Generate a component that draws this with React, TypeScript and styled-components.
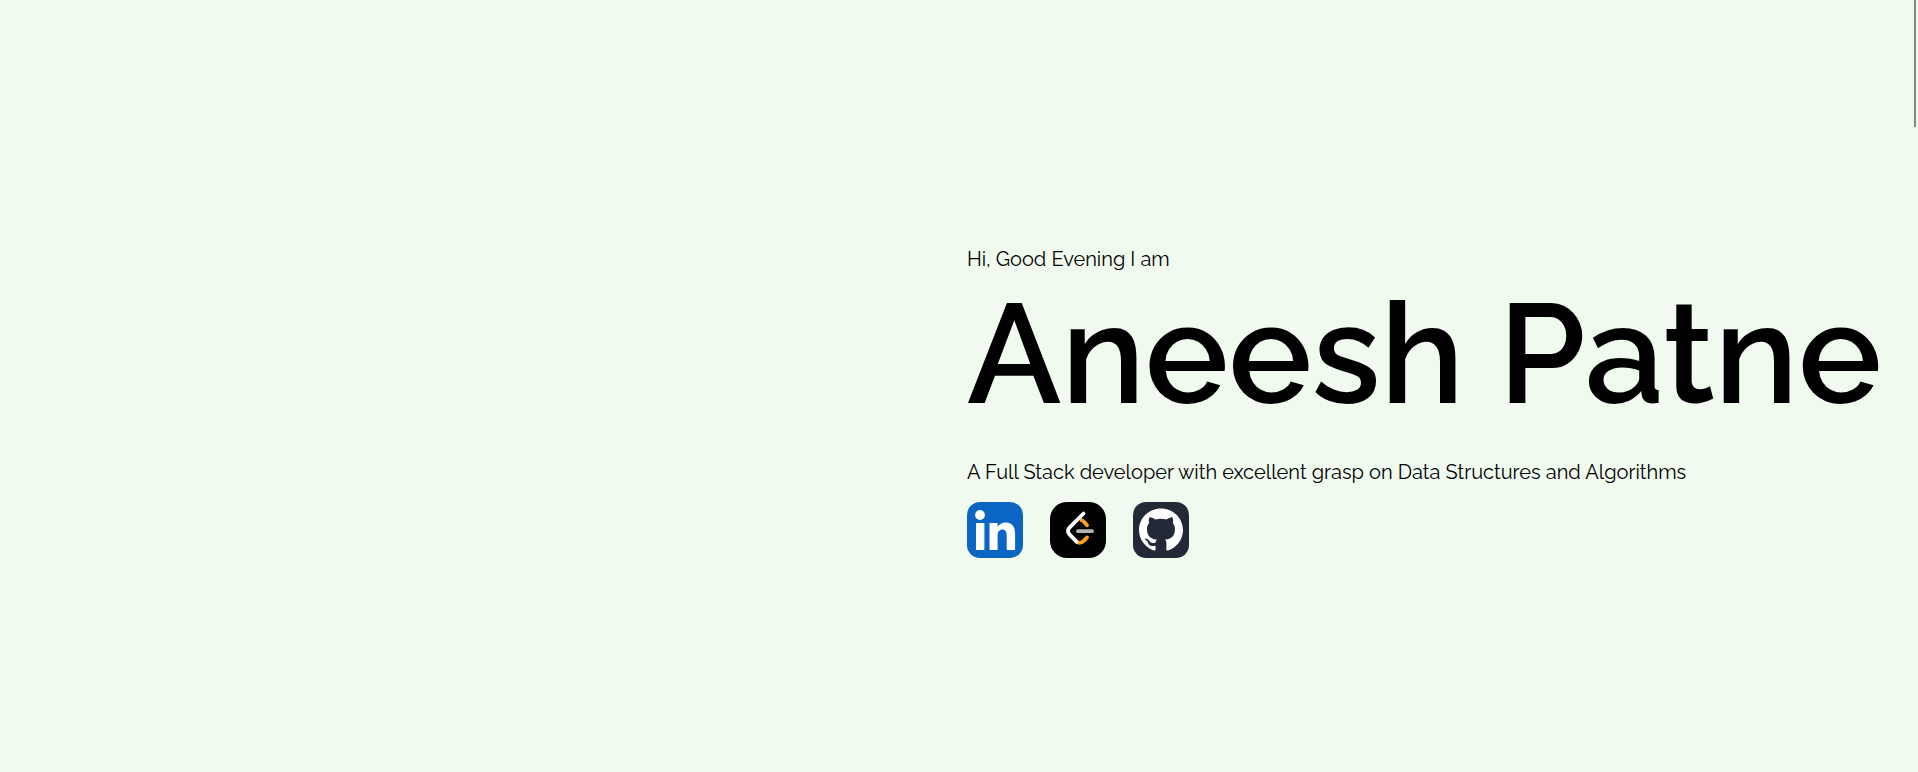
import React from "react";
import styled, { createGlobalStyle } from "styled-components";

const GlobalStyle = createGlobalStyle`
  *, *::before, *::after { box-sizing: border-box; }
  body {
    margin: 0;
    background: #f0faef;
    color: #000;
    font-family: Raleway, Lato, "Open Sans", sans-serif;
  }
`;

const Page = styled.main`
  display: grid;
  grid-template-columns: 1fr 1fr;
  align-items: center;
  min-height: 100vh;
  padding-top: 28px;
`;

const Artwork = styled.div`
  min-width: 0;
`;

const Intro = styled.section`
  min-width: 0;
  padding: 0 8px;
`;

const Line = styled.p`
  margin: 0;
  font-size: 20px;
  line-height: 32px;
`;

const Name = styled.h1`
  margin: 0;
  padding: 9px 0 32px;
  font-size: 140px;
  font-weight: 600;
  line-height: 140px;
  white-space: nowrap;
`;

const Links = styled.nav`
  display: flex;
  gap: 27px;
  padding-top: 14px;
`;

const IconLink = styled.a`
  display: block;
  width: 56px;
  height: 56px;

  svg { display: block; width: 100%; height: 100%; }
`;

const ScrollThumb = styled.div`
  position: fixed;
  top: 0;
  right: 2px;
  width: 2px;
  height: 127px;
  background: #868686;
`;

const LinkedInIcon = () => (
  <svg viewBox="0 0 56 56" aria-hidden="true">
    <rect width="56" height="56" rx="13" fill="#0a66c2" />
    <circle cx="13" cy="13" r="4.9" fill="#fff" />
    <rect x="9" y="21" width="8.4" height="27" rx=".7" fill="#fff" />
    <path
      fill="#fff"
      d="M23.2 21h6.7q.7 0 .7.7v3c1.600-2.600 4.500-4.300 8-4.300 6.500 0 9.500 4.300 9.500 11.100v15.800q0 .7-.7.7h-7q-.7 0-.7-.7V33.600c0-4-1.300-6.100-4.300-6.100-3.100 0-4.800 2.200-4.800 6.100v13.700q0 .7-.7.7h-6.700q-.7 0-.7-.7V21.700q0-.7.700-.7z"
    />
  </svg>
);

const LeetCodeIcon = () => (
  <svg viewBox="0 0 56 56" aria-hidden="true">
    <rect width="56" height="56" rx="17" fill="#000" />
    <g fill="none" strokeLinecap="round" strokeLinejoin="round" strokeWidth="3.8">
      <path stroke="#ffa116" d="M31.500 18.200q1.500.2 5.500 5" />
      <path stroke="#ffa116" d="M37 35.500l-3.200 3.400q-3.800 3.300-7.300.8" />
      <path stroke="#b3b3b3" d="M28 29.200h14" />
      <path stroke="#fff" d="M33.500 11.500L19.200 25.800q-2.400 3.100 0 6.400l7.300 7.500" />
    </g>
  </svg>
);

const GitHubIcon = () => (
  <svg viewBox="0 0 56 56" aria-hidden="true">
    <rect width="56" height="56" rx="13" fill="#242938" />
    <path
      fill="#fff"
      transform="translate(6 5.500) scale(1.833)"
      d="M12 .5C5.370.5 0 5.780 0 12.292c0 5.211 3.438 9.630 8.205 11.188.6.111.82-.254.82-.567 0-.28-.01-1.022-.015-2.005-3.338.711-4.042-1.582-4.042-1.582-.546-1.361-1.335-1.725-1.335-1.725-1.087-.731.084-.716.084-.716 1.205.082 1.838 1.215 1.838 1.215 1.070 1.803 2.809 1.282 3.495.981.108-.763.417-1.282.76-1.577-2.665-.295-5.466-1.309-5.466-5.827 0-1.287.465-2.339 1.235-3.164-.135-.298-.54-1.497.105-3.121 0 0 1.005-.316 3.300 1.209.96-.262 1.980-.392 3-.398 1.020.006 2.040.136 3 .398 2.280-1.525 3.285-1.209 3.285-1.209.645 1.624.24 2.823.12 3.121.765.825 1.230 1.877 1.230 3.164 0 4.530-2.805 5.527-5.475 5.817.42.354.81 1.077.81 2.182 0 1.578-.015 2.846-.015 3.229 0 .309.210.678.825.56C20.565 21.917 24 17.495 24 12.292 24 5.780 18.627.5 12 .5z"
    />
  </svg>
);

export default function App() {
  return (
    <>
      <GlobalStyle />
      <Page>
        <Artwork />
        <Intro>
          <Line>Hi, Good Evening I am</Line>
          <Name>Aneesh Patne</Name>
          <Line>A Full Stack developer with excellent grasp on Data Structures and Algorithms</Line>
          <Links aria-label="Profiles">
            <IconLink href="#linkedin" aria-label="LinkedIn"><LinkedInIcon /></IconLink>
            <IconLink href="#leetcode" aria-label="LeetCode"><LeetCodeIcon /></IconLink>
            <IconLink href="#github" aria-label="GitHub"><GitHubIcon /></IconLink>
          </Links>
        </Intro>
      </Page>
      <ScrollThumb />
    </>
  );
}
